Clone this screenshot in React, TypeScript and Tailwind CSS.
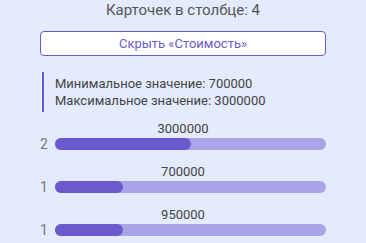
const rows = [
  { value: 3000000, count: 2, pct: 50 },
  { value: 700000, count: 1, pct: 25 },
  { value: 950000, count: 1, pct: 25 },
];

export default function App() {
  return (
    <div
      className="w-[366px] h-[243px] overflow-hidden bg-[#e3ebfd] px-10"
      style={{ fontFamily: "Roboto, 'Noto Sans', sans-serif" }}
    >
      <h2 className="text-center text-[15px] leading-[20px] text-[#555] pt-0">
        Карточек в столбце: 4
      </h2>

      <button className="mt-[11px] w-full h-[25px] bg-white border border-[#6a5acd] rounded-[4px] text-[13px] text-[#6a5acd]">
        Скрыть «Стоимость»
      </button>

      <div className="mt-4 ml-[2px] border-l-[2px] border-[#6a5acd] pl-[11px] py-[3px] text-[13px] leading-[17px] text-[#444]">
        <p>Минимальное значение: 700000</p>
        <p>Максимальное значение: 3000000</p>
      </div>

      <div className="mt-[8px] flex flex-col gap-[13px]">
        {rows.map((r) => (
          <div key={r.value}>
            <div className="text-center text-[13px] leading-[18px] text-[#444]">
              {r.value}
            </div>
            <div className="flex items-center">
              <span className="w-[15px] text-[14px] leading-[12px] text-[#777]">
                {r.count}
              </span>
              <div className="flex-1 h-3 rounded-full bg-[#a9a4e8]">
                <div
                  className="h-3 rounded-full bg-[#6a5acd]"
                  style={{ width: `${r.pct}%` }}
                />
              </div>
            </div>
          </div>
        ))}
      </div>
    </div>
  );
}
